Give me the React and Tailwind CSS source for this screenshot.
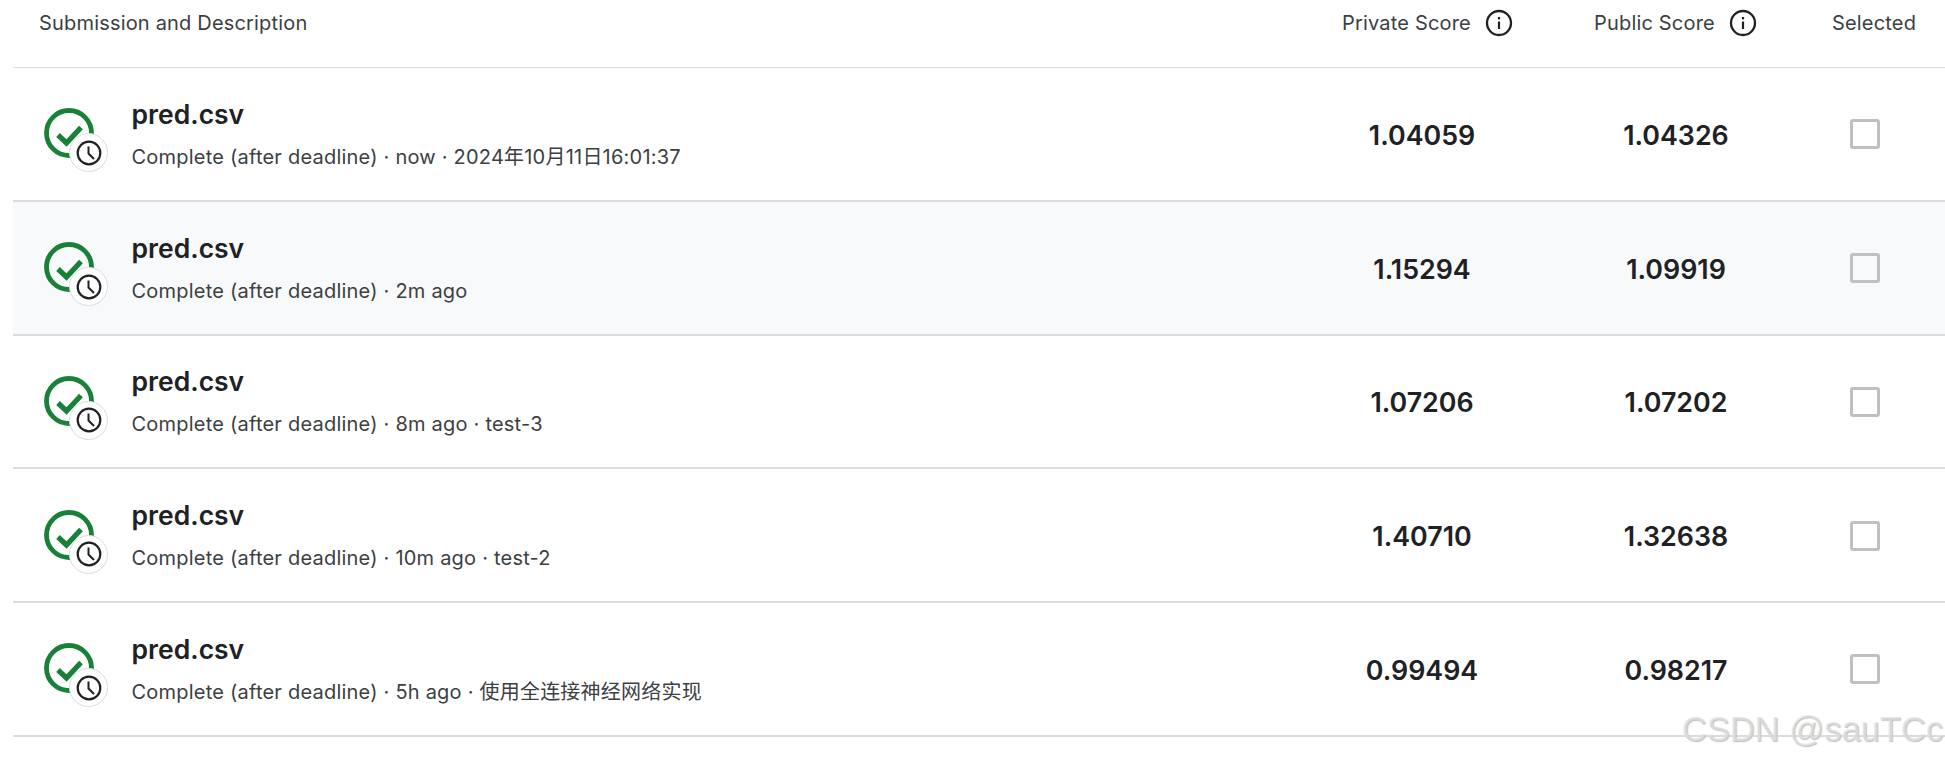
const rows = [
  { meta: "Complete (after deadline) · now · 2024年10月11日16:01:37", priv: "1.04059", pub: "1.04326" },
  { meta: "Complete (after deadline) · 2m ago", priv: "1.15294", pub: "1.09919", hover: true },
  { meta: "Complete (after deadline) · 8m ago · test-3", priv: "1.07206", pub: "1.07202" },
  { meta: "Complete (after deadline) · 10m ago · test-2", priv: "1.40710", pub: "1.32638" },
  { meta: "Complete (after deadline) · 5h ago · 使用全连接神经网络实现", priv: "0.99494", pub: "0.98217" },
];

function InfoIcon() {
  return (
    <svg width="28" height="28" viewBox="0 0 28 28" fill="none">
      <circle cx="14" cy="14" r="12" stroke="#202124" strokeWidth="2.3" />
      <rect x="12.9" y="12.5" width="2.2" height="7.5" fill="#202124" />
      <rect x="12.9" y="8" width="2.2" height="2.4" fill="#202124" />
    </svg>
  );
}

function StatusIcon() {
  return (
    <div className="relative w-[64px] h-[64px] shrink-0 mt-[13px]">
      <svg width="52" height="52" viewBox="0 0 52 52" fill="none" className="absolute left-0 top-0">
        <circle cx="25" cy="25" r="22.5" stroke="#188038" strokeWidth="4.8" />
        <path d="M14 27 L22.5 35 L37 19.5" stroke="#188038" strokeWidth="5.2" />
      </svg>
      <div className="absolute left-[25px] top-[25px] w-[39px] h-[39px] rounded-full bg-white border border-[#dadce0] flex items-center justify-center">
        <svg width="26" height="26" viewBox="0 0 26 26" fill="none">
          <circle cx="13" cy="13" r="11.3" stroke="#202124" strokeWidth="2.2" />
          <path d="M12.5 6.5 V13.5 L18 19" stroke="#202124" strokeWidth="2" />
        </svg>
      </div>
    </div>
  );
}

function Row({ row }) {
  return (
    <div className={`flex items-center h-[133.75px] border-b-2 border-[#dadce0] ${row.hover ? "bg-[#f8f9fa]" : "bg-white"}`}>
      <div className="flex items-center flex-1 pl-[31px]">
        <StatusIcon />
        <div className="ml-[23.5px]">
          <div className="text-[26.5px] leading-[30px] font-semibold text-[#202124]">pred.csv</div>
          <div className="text-[20px] tracking-[0.22px] leading-[24px] mt-[16px] text-[#3c4043]">{row.meta}</div>
        </div>
      </div>
      <div className="w-[254px] mt-[2px] text-center text-[26.8px] font-semibold text-[#202124]">{row.priv}</div>
      <div className="w-[254px] mt-[2px] text-center text-[26.8px] font-semibold text-[#202124]">{row.pub}</div>
      <div className="w-[142px] flex justify-center pr-[19px] mt-[1px]">
        <div className="w-[30px] h-[30px] rounded-[3px] border-[3.5px] border-[#bdc1c6]"></div>
      </div>
    </div>
  );
}

export default function App() {
  return (
    <div className="relative w-[1945px] h-[760px] bg-white overflow-hidden font-['Inter','Noto_Sans_CJK_SC',sans-serif]">
      <div className="ml-[13px]">
        <div className="flex items-center h-[68px] pb-[21px] border-b border-[#dadce0] text-[20px] tracking-[0.18px] text-[#3c4043]">
          <div className="flex-1 pl-[26px]">Submission and Description</div>
          <div className="w-[254px] flex items-center gap-[14px] pl-[47px]">
            <span>Private Score</span>
            <InfoIcon />
          </div>
          <div className="w-[254px] flex items-center gap-[14px] pl-[45px]">
            <span>Public Score</span>
            <InfoIcon />
          </div>
          <div className="w-[142px] text-center">Selected</div>
        </div>
        {rows.map((row, i) => (
          <Row key={i} row={row} />
        ))}
      </div>
      <div className="absolute right-[2px] bottom-[14px] text-[34.5px] leading-none font-['Liberation_Sans',sans-serif] text-[#e4e4e4]/70 [text-shadow:1px_1px_1px_#c0c0c0]">
        CSDN @sauTCc
      </div>
    </div>
  );
}
